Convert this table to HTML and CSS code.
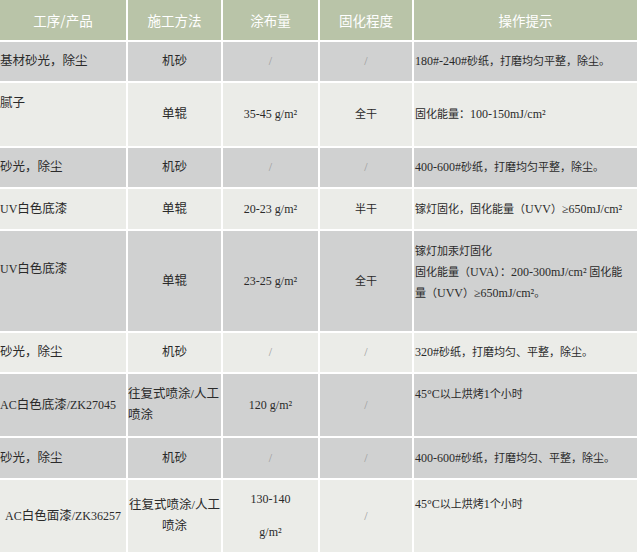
FILE: index.html
```html
<!DOCTYPE html>
<html lang="zh-CN">
<head>
<meta charset="utf-8">
<title>施工工艺</title>
<link rel="stylesheet" href="styles.css">
</head>
<body>
<div class="sheet">
  <div class="c hd"><p class="t">工序/产品</p></div>
  <div class="c hd"><p class="t">施工方法</p></div>
  <div class="c hd"><p class="t">涂布量</p></div>
  <div class="c hd"><p class="t">固化程度</p></div>
  <div class="c hd"><p class="t">操作提示</p></div>

  <div class="c g c1"><p class="t">基材砂光，除尘</p></div>
  <div class="c g c2 mid"><p class="t">机砂</p></div>
  <div class="c g c3 mid sl"><p class="t">/</p></div>
  <div class="c g c4 mid sl"><p class="t">/</p></div>
  <div class="c g c5"><p class="t"><span class="l">180#-240#</span>砂纸，打磨均匀平整，除尘。</p></div>

  <div class="c w c1 top pt10"><p class="t">腻子</p></div>
  <div class="c w c2 mid"><p class="t">单辊</p></div>
  <div class="c w c3 mid"><p class="t">35-45 g/m²</p></div>
  <div class="c w c4 mid"><p class="t">全干</p></div>
  <div class="c w c5"><p class="t">固化能量：<span class="l">100-150mJ/cm²</span></p></div>

  <div class="c g c1"><p class="t">砂光，除尘</p></div>
  <div class="c g c2 mid"><p class="t">机砂</p></div>
  <div class="c g c3 mid sl"><p class="t">/</p></div>
  <div class="c g c4 mid sl"><p class="t">/</p></div>
  <div class="c g c5"><p class="t"><span class="l">400-600#</span>砂纸，打磨均匀平整，除尘。</p></div>

  <div class="c w c1"><p class="t"><span class="l">UV</span>白色底漆</p></div>
  <div class="c w c2 mid"><p class="t">单辊</p></div>
  <div class="c w c3 mid"><p class="t">20-23 g/m²</p></div>
  <div class="c w c4 mid"><p class="t">半干</p></div>
  <div class="c w c5"><p class="t">镓灯固化，固化能量（<span class="l">UVV</span>）<span class="l">≥650mJ/cm²</span></p></div>

  <div class="c g c1 top pt28"><p class="t"><span class="l">UV</span>白色底漆</p></div>
  <div class="c g c2 mid"><p class="t">单辊</p></div>
  <div class="c g c3 mid"><p class="t">23-25 g/m²</p></div>
  <div class="c g c4 mid"><p class="t">全干</p></div>
  <div class="c g c5 top pt10"><p class="t">镓灯加汞灯固化<br>固化能量（<span class="l">UVA</span>）：<span class="l">200-300mJ/cm²</span> 固化能<br>量（<span class="l">UVV</span>）<span class="l">≥650mJ/cm²</span>。</p></div>

  <div class="c w c1"><p class="t">砂光，除尘</p></div>
  <div class="c w c2 mid"><p class="t">机砂</p></div>
  <div class="c w c3 mid sl"><p class="t">/</p></div>
  <div class="c w c4 mid sl"><p class="t">/</p></div>
  <div class="c w c5"><p class="t"><span class="l">320#</span>砂纸，打磨均匀、平整，除尘。</p></div>

  <div class="c g c1"><p class="t"><span class="l">AC</span>白色底漆<span class="l">/ZK27045</span></p></div>
  <div class="c g c2"><p class="t">往复式喷涂/人工<br>喷涂</p></div>
  <div class="c g c3 mid"><p class="t">120 g/m²</p></div>
  <div class="c g c4 mid sl"><p class="t">/</p></div>
  <div class="c g c5 top pt10"><p class="t"><span class="l">45°C</span>以上烘烤<span class="l">1</span>个小时</p></div>

  <div class="c g c1"><p class="t">砂光，除尘</p></div>
  <div class="c g c2 mid"><p class="t">机砂</p></div>
  <div class="c g c3 mid sl"><p class="t">/</p></div>
  <div class="c g c4 mid sl"><p class="t">/</p></div>
  <div class="c g c5"><p class="t"><span class="l">400-600#</span>砂纸，打磨均匀、平整，除尘。</p></div>

  <div class="c w c1 mid"><p class="t"><span class="l">AC</span>白色面漆<span class="l">/ZK36257</span></p></div>
  <div class="c w c2 mid"><p class="t">往复式喷涂/人工<br>喷涂</p></div>
  <div class="c w c3 mid tall"><p class="t">130-140<br>g/m²</p></div>
  <div class="c w c4 mid sl"><p class="t">/</p></div>
  <div class="c w c5 top pt14"><p class="t"><span class="l">45°C</span>以上烘烤<span class="l">1</span>个小时</p></div>
</div>
</body>
</html>
```

FILE: styles.css
```css
html, body {
  margin: 0;
  padding: 0;
  background: #ffffff;
}

.sheet {
  display: grid;
  grid-template-columns: 126px 93px 95px 92px 223px;
  grid-template-rows: 40px 39px 63px 39px 40px 100px 39px 62px 40px 72px;
  gap: 2px;
  width: 637px;
  background: #ffffff;
  font-family: "Liberation Serif", "Noto Sans CJK SC", serif;
  color: #2a2a2a;
}

.c {
  display: flex;
  align-items: center;
  line-height: 21px;
  font-size: 12.5px;
  padding: 0;
  overflow: hidden;
}

.t {
  margin: 0;
  white-space: nowrap;
}

.hd {
  background: #b9c4a8;
  color: #ffffff;
  justify-content: center;
  font-family: "Noto Sans CJK SC", sans-serif;
  font-size: 13.5px;
}

.g { background: #d0d1d1; }
.w { background: #ebece8; }

.mid {
  justify-content: center;
  text-align: center;
}

.top { align-items: flex-start; }
.pt10 { padding-top: 10px; }
.pt14 { padding-top: 14px; }
.pt28 { padding-top: 28px; }

.c1 { font-size: 12.5px; }
.c2 { font-size: 12.5px; }
.c3 { font-size: 12px; }
.c4 { font-size: 11px; }
.c5 { font-size: 11px; padding-left: 1px; }

.l { font-size: 12px; }

.sl {
  color: #999999;
  font-size: 12px;
}

.tall { line-height: 33px; }
```
